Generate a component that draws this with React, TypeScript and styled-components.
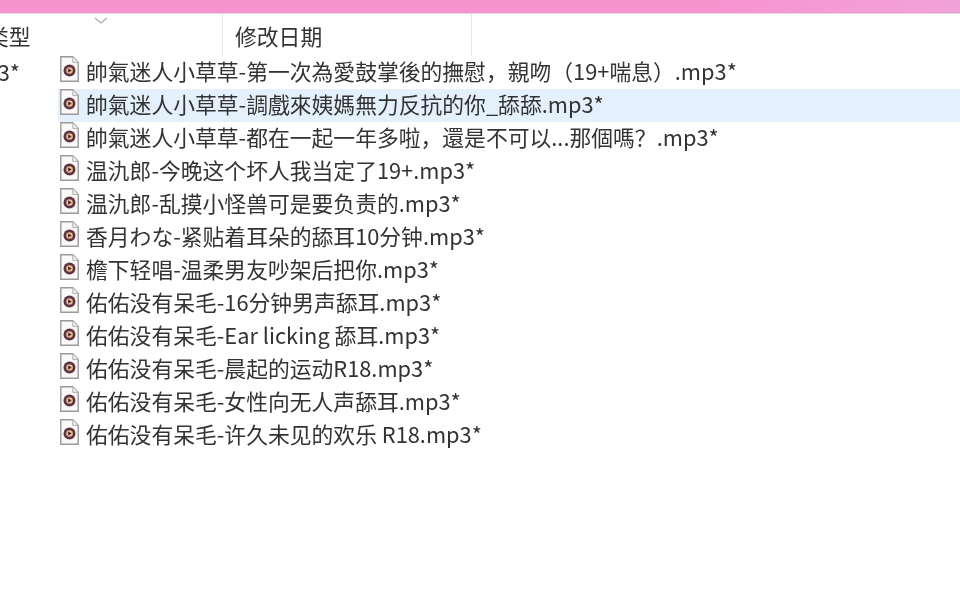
import { FunctionComponent } from 'react';
import styled, { createGlobalStyle } from 'styled-components';

const GlobalStyle = createGlobalStyle`
  html, body {
    margin: 0;
    padding: 0;
    background: #fff;
    overflow: hidden;
  }
`;

const Window = styled.div`
  width: 960px;
  height: 595px;
  overflow: hidden;
  background: #fff;
  color: #333;
  font-family: "Noto Sans CJK SC", "Noto Sans", sans-serif;
  font-size: 21.8px;
  filter: blur(0.5px);
`;

const TitleBar = styled.div`
  height: 13px;
  background: linear-gradient(90deg, #f694d0 0%, #f694d0 75%, #f2a2da 100%);
  border-bottom: 1px solid #e3d5de;
`;

const ColumnHeader = styled.div`
  display: grid;
  grid-template-columns: 224px 249px;
  height: 42px;
  margin-left: -1px;
`;

const HeaderCell = styled.div`
  position: relative;
  line-height: 43px;
  border-right: 1px solid #e5e5e5;
  white-space: nowrap;
  overflow: hidden;
`;

const TypeLabel = styled.span`
  display: block;
  margin-left: -12px;
`;

const DateLabel = styled.span`
  display: block;
  margin-left: 12px;
`;

const SortArrow = styled.svg`
  position: absolute;
  top: 3px;
  left: 95px;
`;

const Body = styled.div`
  display: grid;
  grid-template-columns: 58px 1fr;
`;

const TypeCell = styled.div`
  margin-left: -36px;
  line-height: 31px;
  white-space: nowrap;
`;

const FileList = styled.div`
  display: flex;
  flex-direction: column;
`;

const FileRow = styled.div<{ $selected?: boolean }>`
  display: flex;
  align-items: center;
  gap: 7px;
  box-sizing: border-box;
  height: 33px;
  padding: 0 0 4px 2px;
  white-space: nowrap;
  background: ${p => (p.$selected ? '#e4f1fc' : 'transparent')};
`;

const IconSvg = styled.svg`
  flex: none;
  margin-bottom: 4px;
`;

const files = [
  '帥氣迷人小草草-第一次為愛鼓掌後的撫慰，親吻（19+喘息）.mp3*',
  '帥氣迷人小草草-調戲來姨媽無力反抗的你_舔舔.mp3*',
  '帥氣迷人小草草-都在一起一年多啦，還是不可以...那個嗎？.mp3*',
  '温氿郎-今晚这个坏人我当定了19+.mp3*',
  '温氿郎-乱摸小怪兽可是要负责的.mp3*',
  '香月わな-紧贴着耳朵的舔耳10分钟.mp3*',
  '檐下轻唱-温柔男友吵架后把你.mp3*',
  '佑佑没有呆毛-16分钟男声舔耳.mp3*',
  '佑佑没有呆毛-Ear licking 舔耳.mp3*',
  '佑佑没有呆毛-晨起的运动R18.mp3*',
  '佑佑没有呆毛-女性向无人声舔耳.mp3*',
  '佑佑没有呆毛-许久未见的欢乐 R18.mp3*',
];

const AudioFileIcon: FunctionComponent = () => (
  <IconSvg width="19" height="26" viewBox="0 0 19 26">
    <path d="M.8.8h12l5.4 5.6v18.8H.8z" fill="#fbf8f8" stroke="#9a9a9a" strokeWidth="1.4" />
    <path d="M12.8.8v5.6h5.4" fill="#eee" stroke="#b0b0b0" />
    <circle cx="9.5" cy="14.5" r="6" fill="#5e3440" />
    <circle cx="9.5" cy="14.5" r="3.3" fill="#e6b98f" />
    <path d="M8.2 12.6l3.4 1.9-3.4 1.9z" fill="#3a2430" />
  </IconSvg>
);

export default function App() {
  return (
    <Window>
      <GlobalStyle />
      <TitleBar />
      <ColumnHeader>
        <HeaderCell>
          <TypeLabel>类型</TypeLabel>
          <SortArrow width="14" height="8" viewBox="0 0 14 8">
            <path d="M1 1l6 5 6-5" fill="none" stroke="#a9a9a9" strokeWidth="1.2" />
          </SortArrow>
        </HeaderCell>
        <HeaderCell>
          <DateLabel>修改日期</DateLabel>
        </HeaderCell>
      </ColumnHeader>
      <Body>
        <TypeCell>mp3*</TypeCell>
        <FileList>
          {files.map((name, i) => (
            <FileRow key={name} $selected={i === 1}>
              <AudioFileIcon />
              <span>{name}</span>
            </FileRow>
          ))}
        </FileList>
      </Body>
    </Window>
  );
}
